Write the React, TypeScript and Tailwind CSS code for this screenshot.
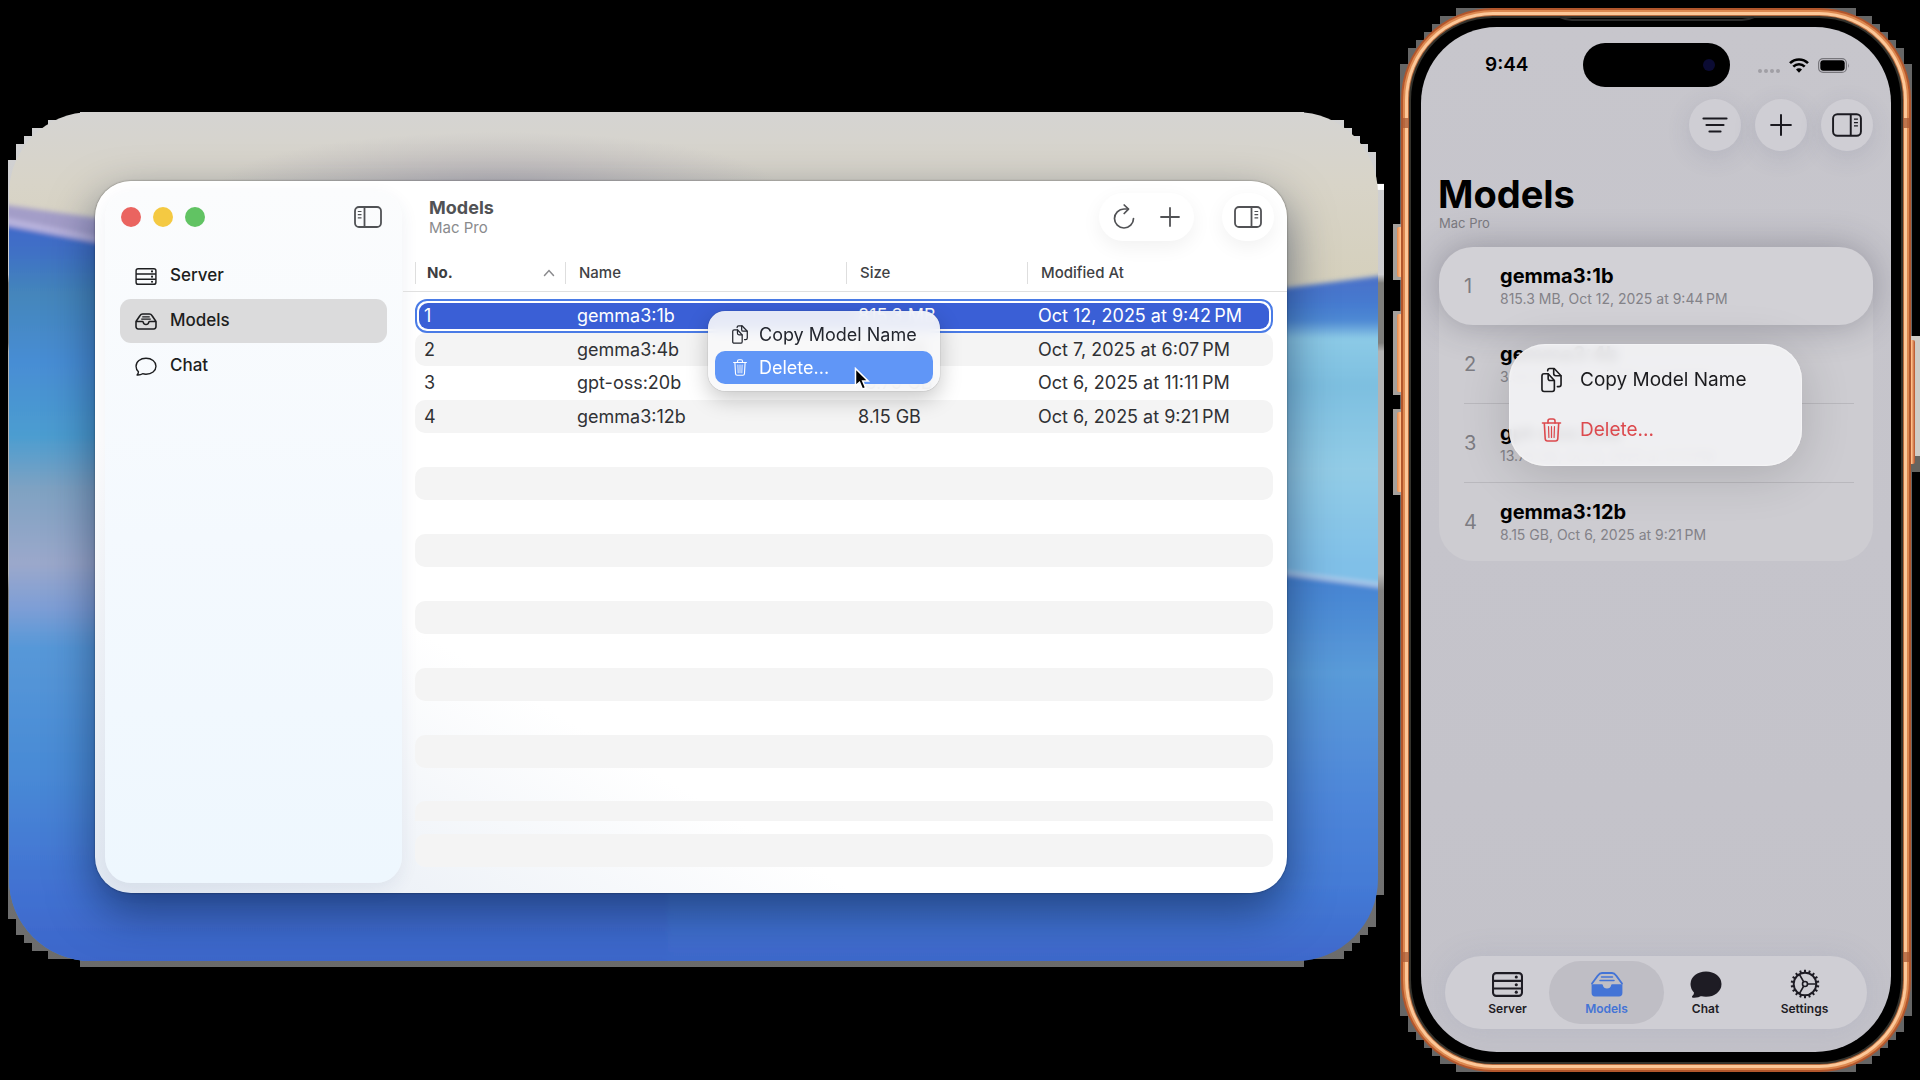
import type { ReactNode } from "react";

type Model = { no: number; name: string; size: string; date: string; phoneDate: string };

const MODELS: Model[] = [
  { no: 1, name: "gemma3:1b", size: "815.3 MB", date: "Oct 12, 2025 at 9:42\u202fPM", phoneDate: "Oct 12, 2025 at 9:44\u202fPM" },
  { no: 2, name: "gemma3:4b", size: "3.34 GB", date: "Oct 7, 2025 at 6:07\u202fPM", phoneDate: "Oct 7, 2025 at 6:07\u202fPM" },
  { no: 3, name: "gpt-oss:20b", size: "13.79 GB", date: "Oct 6, 2025 at 11:11\u202fPM", phoneDate: "Oct 6, 2025 at 11:11\u202fPM" },
  { no: 4, name: "gemma3:12b", size: "8.15 GB", date: "Oct 6, 2025 at 9:21\u202fPM", phoneDate: "Oct 6, 2025 at 9:21\u202fPM" },
];

/* ---------- icons ---------- */

function ServerIcon({ className }: { className: string }) {
  return (
    <svg viewBox="0 0 30 24" className={className} fill="none" stroke="currentColor" strokeWidth="2" aria-hidden="true">
      <rect x="1" y="1" width="28" height="22" rx="3" />
      <path d="M1 8.5h28M1 15.8h28" />
      <g fill="currentColor" stroke="none">
        <circle cx="23.5" cy="4.8" r="1.5" />
        <circle cx="23.5" cy="12.2" r="1.5" />
        <circle cx="23.5" cy="19.4" r="1.5" />
      </g>
    </svg>
  );
}

function TrayIcon({ className, filled = false }: { className: string; filled?: boolean }) {
  if (filled) {
    return (
      <svg viewBox="0 0 32 25" className={className} aria-hidden="true">
        <path
          d="M1 11.5L7 3.4Q8.600 1 11 1h10q2.400 0 4 2.400L31 11.500"
          fill="none"
          stroke="currentColor"
          strokeWidth="1.800"
          strokeLinecap="round"
        />
        <path d="M10.500 5h11M9 8.500h14" stroke="currentColor" strokeWidth="1.500" strokeLinecap="round" />
        <path
          d="M.6 12.200h10.200q1 0 1.100 1a4.200 4.200 0 0 0 8.200 0q.1-1 1.100-1h10.200V21q0 3.400-3.400 3.400H4Q.6 24.400.6 21z"
          fill="currentColor"
        />
      </svg>
    );
  }
  return (
    <svg viewBox="0 0 32 25" className={className} fill="none" stroke="currentColor" strokeWidth="2.300" strokeLinejoin="round" aria-hidden="true">
      <path d="M1.300 12.500L7 4Q8.600 1.400 11 1.400h10q2.400 0 4 2.600l5.700 8.500V20q0 3.400-3.400 3.400H4.700q-3.400 0-3.400-3.400z" />
      <path d="M1.300 12.500h9.200q1.200 0 1.500 1.200a4.100 4.100 0 0 0 8 0q.3-1.200 1.500-1.200h9.200" />
      <path d="M10.500 5.600h11M9 9h14" strokeWidth="1.700" />
    </svg>
  );
}

function BubbleIcon({ className, filled = false }: { className: string; filled?: boolean }) {
  return (
    <svg viewBox="0 0 32 27" className={className} fill={filled ? "currentColor" : "none"} stroke="currentColor" strokeWidth="2" strokeLinejoin="round" aria-hidden="true">
      <path d="M16 1.500c8.200 0 14.500 5 14.500 11.600S24.200 24.700 16 24.700c-1.700 0-3.400-.2-4.900-.7-2 1.400-4.600 2-8.100 1.800 1.400-1.500 2.200-2.900 2-4.600C2.700 19 1.500 16.200 1.500 13.100 1.500 6.500 7.800 1.500 16 1.500z" />
    </svg>
  );
}

function SidebarIcon({ className, side = "left" }: { className: string; side?: "left" | "right" }) {
  return (
    <svg viewBox="0 0 28 22" className={className} fill="none" stroke="currentColor" strokeWidth="1.800" aria-hidden="true">
      <rect x="1" y="1" width="26" height="20" rx="4" />
      {side === "left" ? (
        <>
          <path d="M10.500 1v20" />
          <path d="M3.800 5.500h3.700M3.800 8.700h3.700M3.800 11.900h3.700" strokeWidth="1.200" />
        </>
      ) : (
        <>
          <path d="M17.500 1v20" />
          <path d="M20.500 5.500h3.700M20.500 8.700h3.700M20.500 11.900h3.700" strokeWidth="1.200" />
        </>
      )}
    </svg>
  );
}

function RefreshIcon() {
  return (
    <svg viewBox="0 0 22 26" className="h-[26px] w-[22px]" fill="none" stroke="currentColor" strokeWidth="1.700" strokeLinecap="round" strokeLinejoin="round" aria-hidden="true">
      <path d="M20.500 14.500a9.500 9.500 0 1 1-9.500-9.500h4" />
      <path d="M11.200 1l4.300 4.100-4.300 4.400" />
    </svg>
  );
}

function PlusIcon({ className }: { className: string }) {
  return (
    <svg viewBox="0 0 20 20" className={className} fill="none" stroke="currentColor" strokeWidth="1.800" strokeLinecap="round" aria-hidden="true">
      <path d="M10 1v18M1 10h18" />
    </svg>
  );
}

function CopyIcon({ className }: { className: string }) {
  return (
    <svg viewBox="0 0 22 26" className={className} fill="none" stroke="currentColor" strokeWidth="1.700" strokeLinejoin="round" strokeLinecap="round" aria-hidden="true">
      <path d="M3.200 6.500h4.300L14 13.500v9.300q0 2.200-2.200 2.200H3.200Q1 25 1 22.800V8.700q0-2.200 2.200-2.200z" />
      <path d="M7.500 6.800v4.600q0 2.100 2.100 2.100h4.200" />
      <path d="M7 3.400Q7 1 9.200 1h4.600L21 8.500v9.300q0 2.200-2.200 2.200h-1.600" />
      <path d="M13.300 1.300v5q0 2.200 2.200 2.200h5.200" />
    </svg>
  );
}

function TrashIcon({ className }: { className: string }) {
  return (
    <svg viewBox="0 0 20 24" className={className} fill="none" stroke="currentColor" strokeWidth="1.600" strokeLinejoin="round" strokeLinecap="round" aria-hidden="true">
      <path d="M1 5h18M2.800 5l.9 15.800q.1 2.200 2.300 2.200h8q2.200 0 2.300-2.200L17.200 5" />
      <path d="M6.500 5V3q0-2 2-2h3q2 0 2 2v2" />
      <path d="M7 8.500l.4 11M10 8.500v11M13 8.500l-.4 11" strokeWidth="1.200" />
    </svg>
  );
}

function SortIcon() {
  return (
    <svg viewBox="0 0 26 18" className="h-[18px] w-[26px]" fill="none" stroke="currentColor" strokeWidth="2.200" strokeLinecap="round" aria-hidden="true">
      <path d="M1.500 2.500h23M4.500 9h17M7.500 15.500h11" />
    </svg>
  );
}

function GearIcon() {
  const teeth = Array.from({ length: 18 }, (_, i) => i * 20);
  return (
    <svg viewBox="0 0 30 30" className="h-[30px] w-[30px]" fill="none" stroke="currentColor" aria-hidden="true">
      <circle cx="15" cy="15" r="11.300" strokeWidth="1.900" />
      {teeth.map((a) => (
        <path key={a} d="M15 .7v3" strokeWidth="2" transform={`rotate(${a} 15 15)`} />
      ))}
      <circle cx="15" cy="15" r="2.500" strokeWidth="1.600" />
      <path d="M17.500 15h8.600M13.700 12.900L9.400 5.400M13.700 17.100l-4.300 7.500" strokeWidth="1.700" />
    </svg>
  );
}

function PointerIcon() {
  return (
    <svg viewBox="0 0 16 24" className="absolute left-[146px] top-[56px] h-6 w-4" aria-hidden="true">
      <path d="M1.500 1.500v17.300l4-3.600 2.900 6.900 3.200-1.300-2.900-6.700h5.600z" fill="#000" stroke="#fff" strokeWidth="1.500" />
    </svg>
  );
}

function WifiIcon() {
  return (
    <svg viewBox="0 0 20 15" className="h-[15px] w-5" fill="none" stroke="currentColor" strokeWidth="2.600" aria-hidden="true">
      <path d="M1 5.200a12.700 12.700 0 0 1 18 0M4.300 8.700a8 8 0 0 1 11.400 0" />
      <path d="M10 14.800l-3-3.200a4.200 4.200 0 0 1 6 0z" fill="currentColor" stroke="none" />
    </svg>
  );
}

function BatteryIcon() {
  return (
    <svg viewBox="0 0 32 15" className="h-[15px] w-8" aria-hidden="true">
      <rect x=".6" y=".6" width="27.800" height="13.800" rx="4.500" fill="none" stroke="#77767b" strokeWidth="1.200" />
      <rect x="2.300" y="2.300" width="24.400" height="10.400" rx="3" fill="#000" />
      <path d="M30 5q1.500 2.500 0 5z" fill="#77767b" />
    </svg>
  );
}

/* ---------- desktop ---------- */

function Wallpaper() {
  return (
    <svg viewBox="0 0 1376 856" preserveAspectRatio="none" className="absolute inset-0 h-full w-full" aria-hidden="true">
      <defs>
        <linearGradient id="halo" x1="0" y1="0" x2="0" y2="1">
          <stop offset="0" stopColor="#d3d3d3" />
          <stop offset=".19" stopColor="#cccccf" />
          <stop offset=".2" stopColor="#7e7e7c" />
          <stop offset=".27" stopColor="#7e7e7c" />
          <stop offset=".28" stopColor="#b3b3b3" />
          <stop offset=".54" stopColor="#b3b3b3" />
          <stop offset=".56" stopColor="#838383" />
          <stop offset="1" stopColor="#6b6b6b" />
        </linearGradient>
        <linearGradient id="sand" x1="0" y1="0" x2="0" y2="1">
          <stop offset="0" stopColor="#d5d4d2" />
          <stop offset=".3" stopColor="#d8d4c8" />
          <stop offset="1" stopColor="#d3cdb4" />
        </linearGradient>
        <linearGradient id="seaLeft" gradientUnits="userSpaceOnUse" x1="0" y1="100" x2="0" y2="850">
          <stop offset="0" stopColor="#3f68cc" />
          <stop offset=".05" stopColor="#3f6fc6" />
          <stop offset=".11" stopColor="#4486bb" />
          <stop offset=".2" stopColor="#478dd4" />
          <stop offset=".3" stopColor="#4c9dd0" />
          <stop offset=".37" stopColor="#7fa2c2" />
          <stop offset=".47" stopColor="#9ba8cb" />
          <stop offset=".53" stopColor="#7d9ed6" />
          <stop offset=".58" stopColor="#5798d8" />
          <stop offset=".75" stopColor="#488ad6" />
          <stop offset=".9" stopColor="#4272d2" />
          <stop offset="1" stopColor="#3c66ca" />
        </linearGradient>
        <linearGradient id="seaRight" gradientUnits="userSpaceOnUse" x1="0" y1="165" x2="0" y2="850">
          <stop offset="0" stopColor="#4a70c8" />
          <stop offset=".04" stopColor="#457bd0" />
          <stop offset=".065" stopColor="#4f8ad4" />
          <stop offset=".09" stopColor="#8ccae6" />
          <stop offset=".16" stopColor="#7dbfe0" />
          <stop offset=".28" stopColor="#92cce6" />
          <stop offset=".42" stopColor="#80c0e8" />
          <stop offset="1" stopColor="#80c0e8" />
        </linearGradient>
        <linearGradient id="deep" gradientUnits="userSpaceOnUse" x1="0" y1="465" x2="0" y2="850">
          <stop offset="0" stopColor="#4583d2" />
          <stop offset=".25" stopColor="#5a9bd9" />
          <stop offset=".6" stopColor="#4d85d9" />
          <stop offset=".8" stopColor="#447bd6" />
          <stop offset="1" stopColor="#3e68cb" />
        </linearGradient>
        <radialGradient id="dune">
          <stop offset="0" stopColor="#a8a4b0" stopOpacity=".7" />
          <stop offset="1" stopColor="#a8a4b0" stopOpacity="0" />
        </radialGradient>
        <filter id="soft" x="-5%" y="-5%" width="110%" height="110%">
          <feGaussianBlur stdDeviation="2.500" />
        </filter>
        <clipPath id="card">
          <rect x="1" y="0" width="1369" height="850" rx="82" />
        </clipPath>
      </defs>
      <path
        fill="url(#halo)"
        d="M72 0H1296V8H1336V16H1344V24H1352V32H1360V40H1368V72H1376V784H1368V816H1360V824H1352V832H1344V840H1336V848H1296V856H72V848H40V840H24V832H16V824H8V808H0V48H8V32H16V24H24V16H40V8H72Z"
      />
      <rect x="1368" y="72" width="8" height="6" fill="#fff" />
      <g clipPath="url(#card)">
        <rect width="1376" height="240" fill="url(#sand)" />
        <ellipse cx="490" cy="75" rx="280" ry="55" fill="url(#dune)" />
        <rect y="200" width="700" height="660" fill="#4580d0" />
        <g filter="url(#soft)">
          <path d="M-10 94L100 108L700 200V860H-10z" fill="url(#seaLeft)" />
          <path d="M-10 92L100 108V132L-10 112z" fill="#a39dc8" />
          <path d="M-10 104L100 127V133L-10 112z" fill="#b9b4dd" />
          <path d="M660 250L1280 176L1390 162V860H660z" fill="url(#seaRight)" />
          <path d="M660 400L1279 462L1390 478V860H660z" fill="url(#deep)" />
          <path d="M1250 458L1390 476" stroke="#b4cdea" strokeWidth="4" />
        </g>
      </g>
    </svg>
  );
}

function Sidebar() {
  const items = [
    { label: "Server", icon: <ServerIcon className="h-[17px] w-[22px]" />, active: false },
    { label: "Models", icon: <TrayIcon className="h-[17px] w-[22px]" />, active: true },
    { label: "Chat", icon: <BubbleIcon className="h-[19px] w-[22px]" />, active: false },
  ];
  return (
    <aside className="my-[10px] ml-[10px] w-[297px] shrink-0 rounded-[26px] bg-linear-to-b from-[#fbfcfd] via-[#f4f9fe] to-[#eef7fe] px-[15px] shadow-[0_6px_18px_rgba(40,70,110,0.08)]">
      <div className="flex h-[52px] items-center gap-3 pl-px">
        <button aria-label="Close" className="h-5 w-5 rounded-full bg-[#ea6460]" />
        <button aria-label="Minimize" className="h-5 w-5 rounded-full bg-[#f4c942]" />
        <button aria-label="Zoom" className="h-5 w-5 rounded-full bg-[#61c363]" />
        <button aria-label="Toggle sidebar" className="ml-auto mr-[5px] text-[#505255]">
          <SidebarIcon className="h-[22px] w-7" />
        </button>
      </div>
      <nav className="mt-[11px] flex flex-col gap-px">
        {items.map((item) => (
          <a
            key={item.label}
            href="#"
            className={
              "flex h-11 items-center gap-[13px] rounded-[11px] pl-[15px] text-[17px] font-medium text-[#1d1e20] " +
              (item.active ? "bg-[#dbdbdc]" : "")
            }
          >
            {item.icon}
            {item.label}
          </a>
        ))}
      </nav>
    </aside>
  );
}

function HeaderCell({ children, first = false, bold = false }: { children: ReactNode; first?: boolean; bold?: boolean }) {
  return (
    <th scope="col" className="h-[39px] p-0 text-left text-[15px]">
      {first && <span className="absolute -left-3 -right-[14px] bottom-0 h-px bg-[#e0e0e0]" />}
      <div
        className={
          "flex h-[22px] items-center justify-between border-l border-[#dedede] pr-[10px] " +
          (first ? "pl-[11px] " : "pl-[13px] ") +
          (bold ? "font-bold text-[#3c3d40]" : "font-medium text-[#404144]")
        }
      >
        {children}
      </div>
    </th>
  );
}

function ModelRow({ model }: { model: Model }) {
  const selected = model.no === 1;
  const striped = model.no % 2 === 0;
  const bg = striped ? "bg-[#f4f4f4] " : "";
  return (
    <tr className={(striped ? "h-[33px] " : "h-[34px] ") + (selected ? "relative isolate text-white" : "text-[#303134]")}>
      <td className={bg + "rounded-l-[10px] p-0 pl-[9px]"}>
        {selected && (
          <span className="absolute inset-0 -z-10 rounded-xl border-2 border-[#4a7be6] p-0.5">
            <span className="block h-full rounded-[9px] bg-[#3a5fd6]" />
          </span>
        )}
        {model.no}
      </td>
      <td className={bg + "p-0 pl-3"}>{model.name}</td>
      <td className={bg + "p-0 pl-3"}>{model.size}</td>
      <td className={bg + "whitespace-nowrap rounded-r-[10px] p-0 pl-[11px]"}>{model.date}</td>
    </tr>
  );
}

function StripeRow({ className }: { className: string }) {
  return (
    <tr>
      <td colSpan={4} className={"p-0 " + className} />
    </tr>
  );
}

function ModelsTable() {
  return (
    <table className="w-full table-fixed border-separate border-spacing-0 text-[18px] leading-[22px]">
      <colgroup>
        <col className="w-[150px]" />
        <col className="w-[281px]" />
        <col className="w-[181px]" />
        <col />
      </colgroup>
      <thead>
        <tr className="relative">
          <HeaderCell first bold>
            No.
            <svg viewBox="0 0 12 8" className="h-2 w-3" fill="none" stroke="#8a8a8d" strokeWidth="1.500" strokeLinecap="round" aria-hidden="true">
              <path d="M1.500 6.500L6 1.500l4.500 5" />
            </svg>
          </HeaderCell>
          <HeaderCell>Name</HeaderCell>
          <HeaderCell>Size</HeaderCell>
          <HeaderCell>Modified At</HeaderCell>
        </tr>
      </thead>
      <tbody>
        <StripeRow className="h-[7px]" />
        {MODELS.map((m) => (
          <ModelRow key={m.no} model={m} />
        ))}
        {[0, 1, 2, 3, 4].map((i) => [
          <StripeRow key={`gap-${i}`} className="h-[34px]" />,
          <StripeRow key={`stripe-${i}`} className="h-[33px] rounded-[10px] bg-[#f4f4f4]" />,
        ])}
        <StripeRow className="h-[33px]" />
        <StripeRow className="h-5 rounded-t-[10px] bg-[#f4f4f4]" />
        <StripeRow className="h-[13px]" />
        <StripeRow className="h-[33px] rounded-[10px] bg-[#f4f4f4]" />
      </tbody>
    </table>
  );
}

function MacContextMenu() {
  return (
    <div role="menu" className="absolute left-[613px] top-[130px] z-20 w-[232px] rounded-[17px] bg-[#f8f8fa]/90 p-[7px] text-[18px] shadow-[0_0_1px_rgba(0,0,0,0.5),0_8px_22px_rgba(0,0,0,0.22)] backdrop-blur-[6px]">
      <button role="menuitem" className="flex h-[33px] w-full items-center gap-[11px] whitespace-nowrap rounded-[10px] pl-[17px] text-[#23262e]">
        <CopyIcon className="h-[19px] w-4" />
        Copy Model Name
      </button>
      <button role="menuitem" className="flex h-[33px] w-full items-center gap-[11px] rounded-[10px] bg-[#6096f7] pl-[17px] text-white">
        <TrashIcon className="h-[17px] w-4" />
        Delete...
      </button>
      <PointerIcon />
    </div>
  );
}

function MacWindow() {
  return (
    <section aria-label="Models on Mac" className="relative flex rounded-[36px] bg-linear-to-tr from-[#e2e9f2] via-white via-[32%] to-white shadow-[0_0_2px_rgba(0,0,0,0.5),0_18px_46px_rgba(8,24,60,0.55)]">
      <Sidebar />
      <div className="min-w-0 flex-1 pb-[26px] pl-[13px] pr-[14px]">
        <header className="flex h-[72px] items-center text-[#515255]">
          <div className="pl-[14px]">
            <h1 className="text-[18px] font-bold leading-[22px]">Models</h1>
            <p className="text-[15px] leading-[18px] text-[#8a8b8d]">Mac Pro</p>
          </div>
          <div className="ml-auto flex h-12 items-center gap-[25px] rounded-full bg-white px-[14px] shadow-[0_6px_20px_rgba(0,0,0,0.06)]">
            <button aria-label="Refresh"><RefreshIcon /></button>
            <button aria-label="Add model"><PlusIcon className="h-5 w-5" /></button>
          </div>
          <div className="-mr-px ml-7 flex h-12 w-[52px] items-center justify-center rounded-full bg-white shadow-[0_6px_20px_rgba(0,0,0,0.06)]">
            <button aria-label="Toggle inspector"><SidebarIcon side="right" className="h-[22px] w-7" /></button>
          </div>
        </header>
        <ModelsTable />
      </div>
      <MacContextMenu />
    </section>
  );
}

/* ---------- phone ---------- */

function PhoneFrame() {
  const layers = [
    { inset: 0, color: "#b2562c" },
    { inset: 2, color: "#dd8850" },
    { inset: 4, color: "#fcc798" },
    { inset: 7, color: "#b86a3c" },
    { inset: 8, color: "#34322c" },
    { inset: 10, color: "#000000" },
  ];
  const leftKeys = [
    { y: 227, h: 50 },
    { y: 314, h: 78 },
    { y: 412, h: 80 },
  ];
  return (
    <svg viewBox="0 0 536 1080" preserveAspectRatio="none" className="absolute inset-0 h-full w-full" aria-hidden="true">
      <defs>
        <linearGradient id="keyLeft">
          <stop offset="0" stopColor="#e88a4c" />
          <stop offset=".5" stopColor="#ffbe88" />
          <stop offset="1" stopColor="#b4522a" />
        </linearGradient>
      </defs>
      <path
        fill="#666666"
        d="M72 8H472V16H488V24H496V32H504V40H512V48H520V64H528V1016H520V1032H512V1040H504V1048H496V1056H488V1064H472V1072H72V1064H56V1056H48V1048H40V1040H32V1032H24V1016H16V64H24V48H32V40H40V32H48V24H56V16H72Z"
      />
      {leftKeys.map((k) => (
        <g key={k.y}>
          <rect x="9" y={k.y - 3} width="9" height={k.h + 6} fill="#a4a09c" />
          <rect x="13" y={k.y} width="7" height={k.h} rx="2" fill="url(#keyLeft)" />
        </g>
      ))}
      <rect x="524" y="336" width="12" height="120" fill="#cfccc6" />
      <rect x="524" y="456" width="12" height="16" fill="#66645f" />
      <rect x="524" y="340" width="7" height="124" rx="2" fill="url(#keyLeft)" />
      {layers.map((l) => (
        <rect key={l.inset} x={17 + l.inset} y={8 + l.inset} width={510 - 2 * l.inset} height={1064 - 2 * l.inset} rx={92 - l.inset} fill={l.color} />
      ))}
      <path d="M17 118h8v10h-8zM519 118h8v10h-8zM17 952h8v10h-8zM519 952h8v10h-8z" fill="#a85a34" fillOpacity=".75" />
      <path d="M176 17q6 3 12 3h170q6 0 12-3" fill="none" stroke="#2c2c2c" strokeWidth="2" />
    </svg>
  );
}

function RoundButton({ label, children }: { label: string; children: ReactNode }) {
  return (
    <button aria-label={label} className="flex h-[52px] w-[52px] items-center justify-center rounded-full bg-[#cfced4] shadow-[0_6px_24px_rgba(70,75,110,0.14)]">
      {children}
    </button>
  );
}

function PhoneRow({ model, divider }: { model: Model; divider: boolean }) {
  const lifted = model.no === 1;
  return (
    <li
      className={
        "pl-[25px] pr-[19px] " +
        (lifted ? "relative z-10 rounded-[34px] bg-[#d2d1d6] shadow-[0_0_36px_rgba(40,40,60,0.32)]" : "")
      }
    >
      <div className={"flex items-center " + (divider ? "h-[79px] border-b border-[#b9b8bd]" : "h-[78px]")}>
        <span className="w-9 text-[20px] text-[#7d7c82]">{model.no}</span>
        <div>
          <p className="text-[20px] font-bold leading-[25px] text-black">{model.name}</p>
          <p className="text-[14px] leading-[20px] text-[#838288]">
            {model.size}, {model.phoneDate}
          </p>
        </div>
      </div>
    </li>
  );
}

function PhoneMenu() {
  return (
    <div role="menu" className="absolute left-[88px] right-[89px] top-[317px] z-20 rounded-[36px] bg-[#f3f3f5]/90 px-8 py-[11px] text-[19px] shadow-[0_8px_50px_rgba(0,0,0,0.16),inset_0_0_2px_#fff] backdrop-blur-[5px]">
      <button role="menuitem" className="flex h-[50px] w-full items-center gap-[18px] text-[#1b1b1e]">
        <CopyIcon className="h-[26px] w-[21px]" />
        Copy Model Name
      </button>
      <button role="menuitem" className="flex h-[50px] w-full items-center gap-[18px] text-[#dc4a4e]">
        <TrashIcon className="h-6 w-[21px]" />
        Delete...
      </button>
    </div>
  );
}

function TabBar() {
  const tabs = [
    { label: "Server", icon: <ServerIcon className="h-[25px] w-[31px]" />, active: false },
    { label: "Models", icon: <TrayIcon filled className="h-[25px] w-8" />, active: true },
    { label: "Chat", icon: <BubbleIcon filled className="h-[27px] w-8" />, active: false },
    { label: "Settings", icon: <GearIcon />, active: false },
  ];
  return (
    <nav className="mx-6 mb-[23px] mt-auto flex h-[73px] items-center rounded-full bg-[#cfced4] px-[13px] shadow-[0_0_30px_rgba(120,130,170,0.16)]">
      {tabs.map((tab) => (
        <a
          key={tab.label}
          href="#"
          className={
            "relative flex h-[63px] flex-1 flex-col items-center justify-center pt-0.5 text-[12px] font-semibold " +
            (tab.active ? "text-[#4474d6]" : "text-[#1e1c24]")
          }
        >
          {tab.active && <span className="absolute -inset-x-2 inset-y-0 rounded-full bg-[#bfbec5]" />}
          <span className="relative flex h-[30px] items-center">{tab.icon}</span>
          <span className="relative mt-px leading-[18px]">{tab.label}</span>
        </a>
      ))}
    </nav>
  );
}

function Phone() {
  return (
    <section aria-label="Models on iPhone" className="relative flex w-[536px] shrink-0 pb-7 pl-[37px] pr-[29px] pt-[27px]">
      <PhoneFrame />
      <div className="relative flex flex-1 flex-col overflow-hidden rounded-[76px] bg-linear-to-b from-[#c7c6cc] via-[#c5c4cb] to-[#c3c2c9]">
        <div className="grid h-[72px] grid-cols-[1fr_147px_1fr] items-center pt-1">
          <span className="pl-16 text-[19px] font-semibold text-black">9:44</span>
          <div className="flex h-11 items-center justify-end rounded-full bg-black pr-[15px]">
            <span className="h-3 w-3 rounded-full bg-[#0b0b33]" />
          </div>
          <div className="flex items-center justify-end gap-[9px] pr-[41px] text-black">
            <span className="mt-3 flex gap-0.5">
              {[0, 1, 2, 3].map((i) => (
                <i key={i} className="h-1 w-1 rounded-full bg-[#a09fa5]" />
              ))}
            </span>
            <WifiIcon />
            <BatteryIcon />
          </div>
        </div>
        <div className="flex justify-end gap-[14px] pr-[18px] text-[#1b1a20]">
          <RoundButton label="Sort"><SortIcon /></RoundButton>
          <RoundButton label="Add model"><PlusIcon className="h-[22px] w-[22px]" /></RoundButton>
          <RoundButton label="Toggle inspector"><SidebarIcon side="right" className="h-6 w-[30px]" /></RoundButton>
        </div>
        <h2 className="mt-[21px] pl-[17px] text-[38px] font-bold leading-[44px] text-black">Models</h2>
        <p className="pl-[18px] text-[13px] leading-[14px] text-[#7b7a80]">Mac Pro</p>
        <ul className="mx-[18px] mt-[17px] rounded-[34px] bg-[#cdccd1]">
          {MODELS.map((m) => (
            <PhoneRow key={m.no} model={m} divider={m.no === 2 || m.no === 3} />
          ))}
        </ul>
        <TabBar />
        <PhoneMenu />
      </div>
    </section>
  );
}

export default function App() {
  return (
    <main className="flex min-h-screen items-stretch bg-black pl-2 font-['Inter','Noto_Sans',sans-serif]">
      <div className="relative mt-28 min-w-0 flex-1 self-start pb-[74px] pl-[87px] pr-[97px] pt-[69px]">
        <Wallpaper />
        <MacWindow />
      </div>
      <Phone />
    </main>
  );
}
